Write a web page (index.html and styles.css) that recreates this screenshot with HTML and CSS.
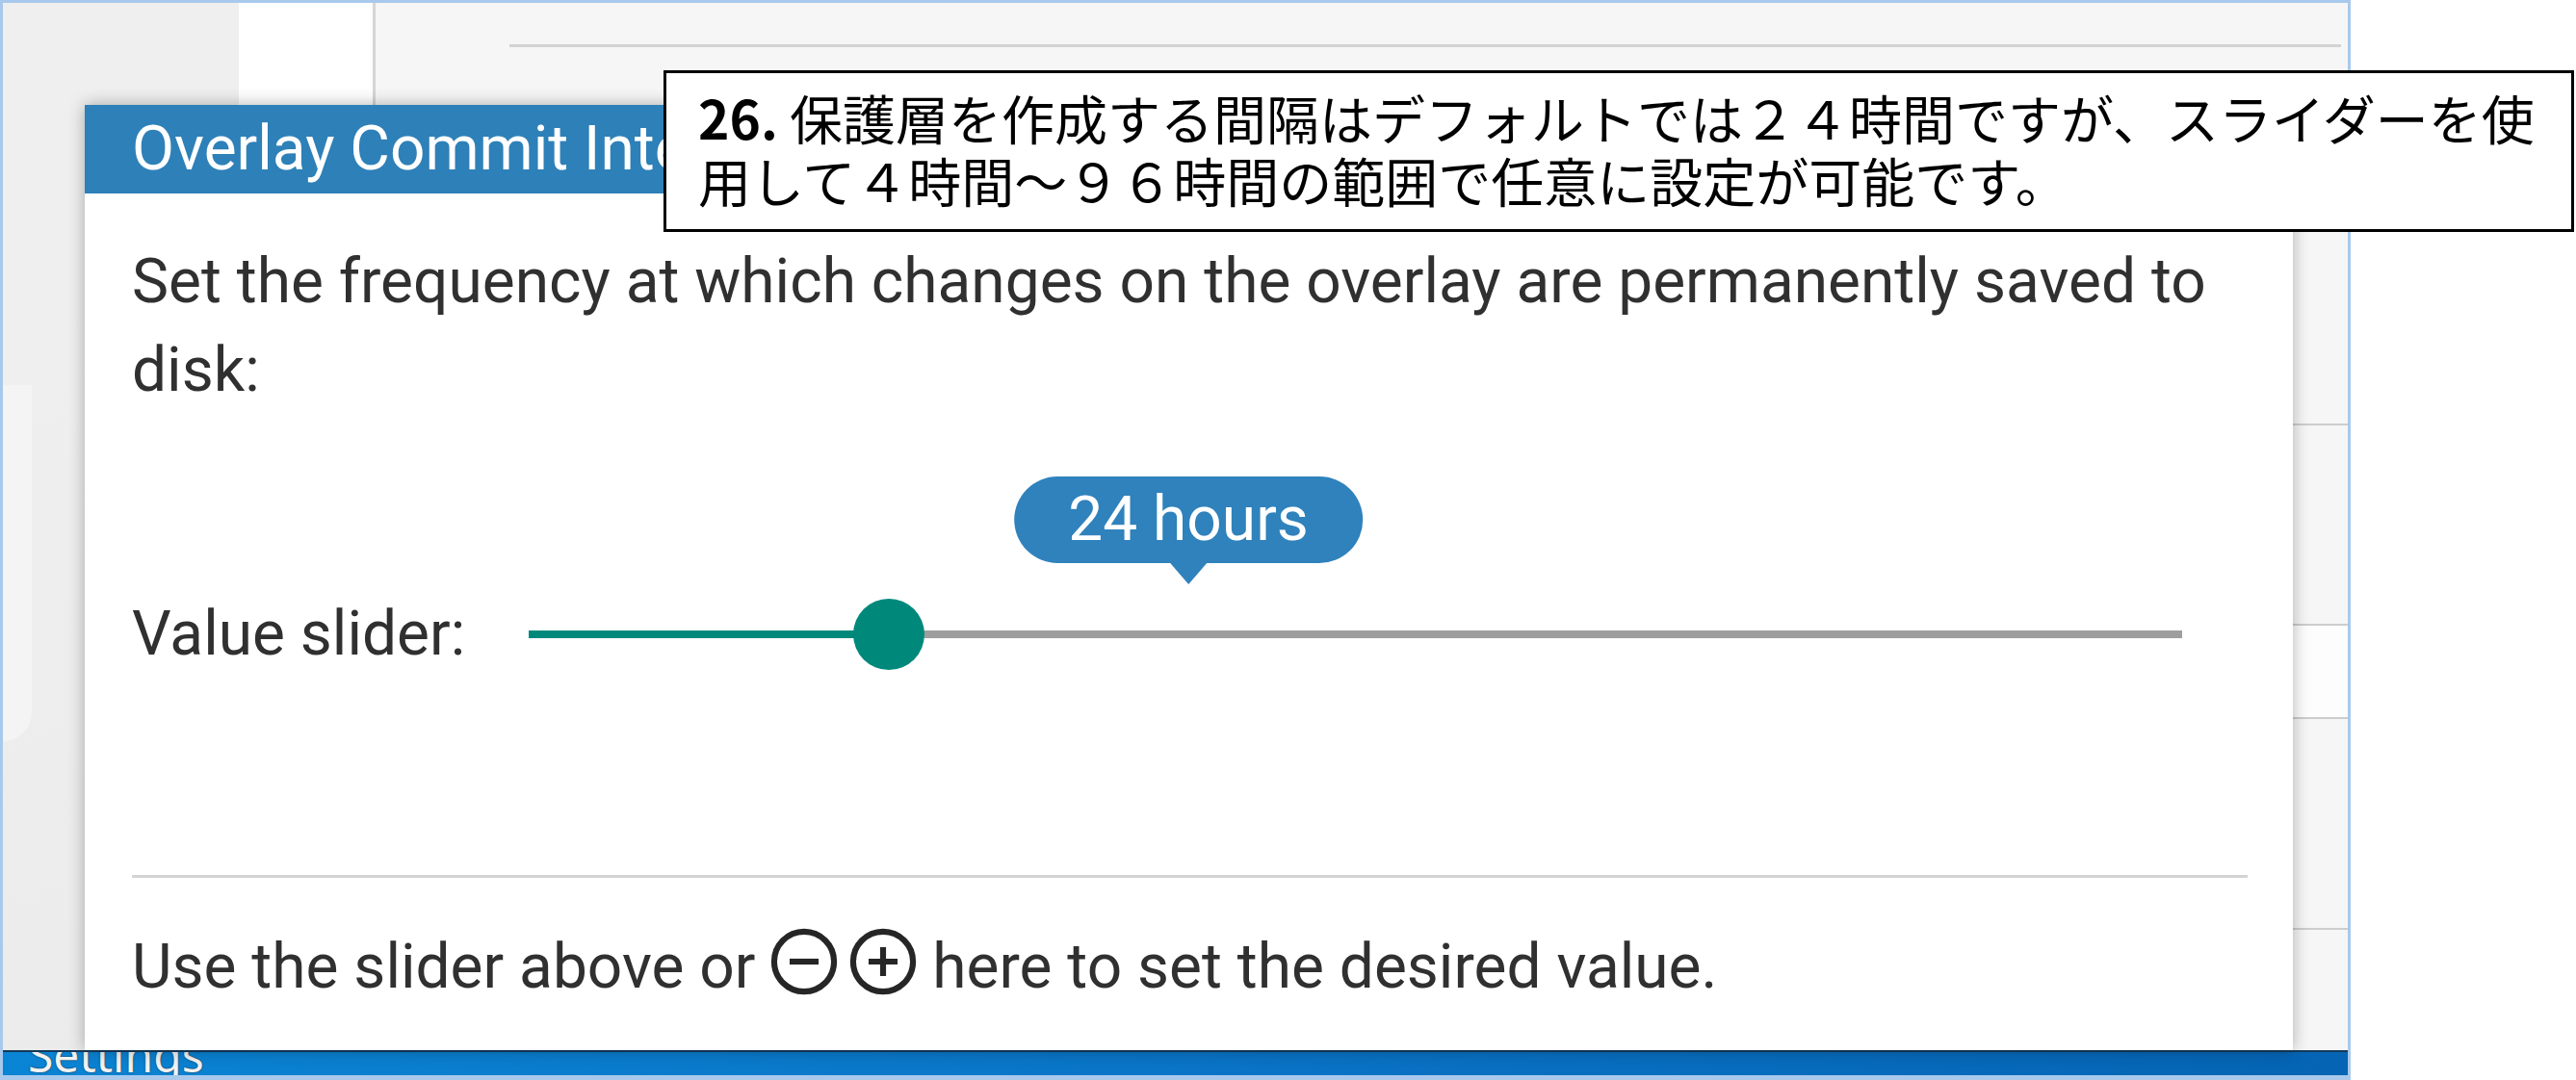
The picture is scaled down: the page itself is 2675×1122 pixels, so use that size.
FILE: index.html
```html
<!DOCTYPE html>
<html>

<head>
    <meta charset="utf-8">
    <title>Overlay Commit Interval</title>
    <link rel="stylesheet" href="styles.css">
</head>

<body>
    <div class="slide">
        <div class="screen">
            <div class="app">
                <div class="app-side">
                    <div class="app-side-glow"></div>
                </div>
                <div class="app-nav"></div>
                <div class="app-main">
                    <div class="app-toolbar"></div>
                    <div class="app-rule"></div>
                    <div class="app-row app-row-first"></div>
                    <div class="app-row app-row-a"></div>
                    <div class="app-row app-row-b"></div>
                    <div class="app-row app-row-c"></div>
                    <div class="app-row app-row-d"></div>
                </div>
            </div>
            <div class="taskbar"><span>Settings</span></div>

            <section class="dialog">
                <h2 class="dialog-title">Overlay Commit Interval</h2>
                <div class="dialog-body">
                    <p class="dialog-text">Set the frequency at which changes on the overlay are permanently saved to disk:</p>
                    <div class="slider-row">
                        <span class="slider-label">Value slider:</span>
                        <div class="slider">
                            <div class="slider-fill" style="width: 21.8%"></div>
                            <div class="slider-thumb" style="left: 21.8%"></div>
                            <div class="slider-tip">24 hours</div>
                        </div>
                    </div>
                    <hr class="dialog-rule">
                    <p class="dialog-hint">Use the slider above or <svg class="hint-icon hint-minus" viewBox="0 0 24 24"><circle cx="12" cy="12" r="9.1"/><path d="M7.6 12h8.8"/></svg><svg class="hint-icon hint-plus" viewBox="0 0 24 24"><circle cx="12" cy="12" r="9.1"/><path d="M7.6 12h8.8M12 7.6v8.8"/></svg> here to set the desired value.</p>
                </div>
            </section>
        </div>

        <div class="callout">
            <b>26.</b> 保護層を作成する間隔はデフォルトでは２４時間ですが、スライダーを使<br>用して４時間～９６時間の範囲で任意に設定が可能です。
        </div>
    </div>
</body>

</html>
```

FILE: styles.css
```css
body {
    margin: 0;
    background-color: #fff;
    font-family: Roboto, "Noto Sans", sans-serif;
}

.slide {
    position: relative;
    width: 2675px;
    height: 1122px;
    overflow: hidden;
}

/* the captured app window */

.screen {
    position: relative;
    width: 2441px;
    height: 1122px;
    box-sizing: border-box;
    border: 3px solid #a8c9ec;
    border-bottom-width: 5px;
    display: flex;
    flex-direction: column;
}

.app {
    flex: 1;
    display: flex;
    min-height: 0;
}

.app-side {
    width: 245px;
    background: linear-gradient(150deg, #efefef 0, #efefef 30%, #ebebeb 100%);
}

.app-side-glow {
    width: 30px;
    height: 370px;
    margin-top: 397px;
    background-color: #f4f4f4;
    border-bottom-right-radius: 30px;
}

.app-nav {
    width: 139px;
    background: linear-gradient(#fff 60%, #f4f4f4);
    border-right: 3px solid #d6d6d6;
}

.app-main {
    flex: 1;
    display: flex;
    flex-direction: column;
    background-color: #f6f6f6;
}

.app-toolbar {
    height: 43px;
}

.app-rule {
    height: 3px;
    margin: 0 7px 0 139px;
    background-color: #d3d3d3;
}

.app-row {
    border-top: 2px solid #cdcdcd;
}

.app-row-first {
    height: 391px;
    border-top: none;
}

.app-row-a {
    height: 206px;
}

.app-row-b {
    height: 95px;
    background-color: #fdfdfd;
}

.app-row-c {
    height: 217px;
}

.app-row-d {
    flex: 1;
}

.taskbar {
    flex: none;
    height: 24px;
    overflow: hidden;
    border-top: 2px solid #14395a;
    background: linear-gradient(to right, #0a84d4, #0a74c6 50%, #0564b4);
}

.taskbar span {
    display: block;
    margin: -21px 0 0 26px;
    font-family: "Noto Sans", sans-serif;
    font-size: 48px;
    line-height: 48px;
    color: #f2f2f2;
    text-shadow: 0 0 2px #2a2a2a;
}

/* dialog */

.dialog {
    position: absolute;
    left: 85px;
    top: 106px;
    width: 2293px;
    height: 982px;
    background-color: #fff;
    box-shadow: 0 0 16px rgba(0, 0, 0, 0.3);
    color: #303030;
    font-size: 64px;
}

.dialog-title {
    margin: 0;
    height: 92px;
    padding: 0 49px;
    background-color: #2e80b8;
    color: #fff;
    font-size: 64px;
    font-weight: normal;
    line-height: 92px;
    white-space: nowrap;
    overflow: hidden;
}

.dialog-body {
    padding: 46px 47px 0 49px;
}

.dialog-text {
    margin: 0;
    line-height: 92px;
}

.slider-row {
    display: flex;
    align-items: center;
    height: 120px;
    margin-top: 168px;
    line-height: 92px;
}

.slider-label {
    flex: none;
    width: 412px;
}

.slider {
    position: relative;
    display: flex;
    align-items: center;
    width: 1717px;
    height: 74px;
    background: linear-gradient(#9e9e9e, #9e9e9e) center / 100% 8px no-repeat;
}

.slider-fill {
    height: 8px;
    background-color: #00897b;
}

.slider-thumb {
    position: absolute;
    top: 0;
    width: 74px;
    height: 74px;
    border-radius: 50%;
    background-color: #00897b;
    transform: translateX(-50%);
}

.slider-tip {
    position: absolute;
    left: 39.9%;
    top: -127px;
    height: 90px;
    padding: 0 56px;
    border-radius: 45px;
    background-color: #2f82bc;
    color: #fff;
    line-height: 90px;
    white-space: nowrap;
    transform: translateX(-50%);
}

.slider-tip::after {
    content: "";
    position: absolute;
    left: 50%;
    top: 100%;
    margin-left: -19px;
    border-left: 19px solid transparent;
    border-right: 19px solid transparent;
    border-top: 22px solid #2f82bc;
}

.dialog-rule {
    margin: 190px 0 0;
    height: 3px;
    border: none;
    background-color: #d3d3d3;
}

.dialog-hint {
    margin: 46px 0 0;
    line-height: 92px;
}

.hint-icon {
    width: 82px;
    height: 82px;
    vertical-align: -14px;
    fill: none;
    stroke: #262626;
    stroke-width: 1.8;
}

.hint-minus {
    margin-left: -6px;
}

.hint-plus {
    margin-right: -6px;
}

/* annotation box */

.callout {
    position: absolute;
    left: 689px;
    top: 73px;
    width: 1984px;
    height: 168px;
    box-sizing: border-box;
    padding: 13px 20px 0 33px;
    border: 3px solid #000;
    background-color: #fff;
    color: #000;
    font-family: "Noto Sans CJK JP", sans-serif;
    font-size: 55px;
    line-height: 65px;
    white-space: nowrap;
}

.callout b {
    font-weight: 600;
}
```
